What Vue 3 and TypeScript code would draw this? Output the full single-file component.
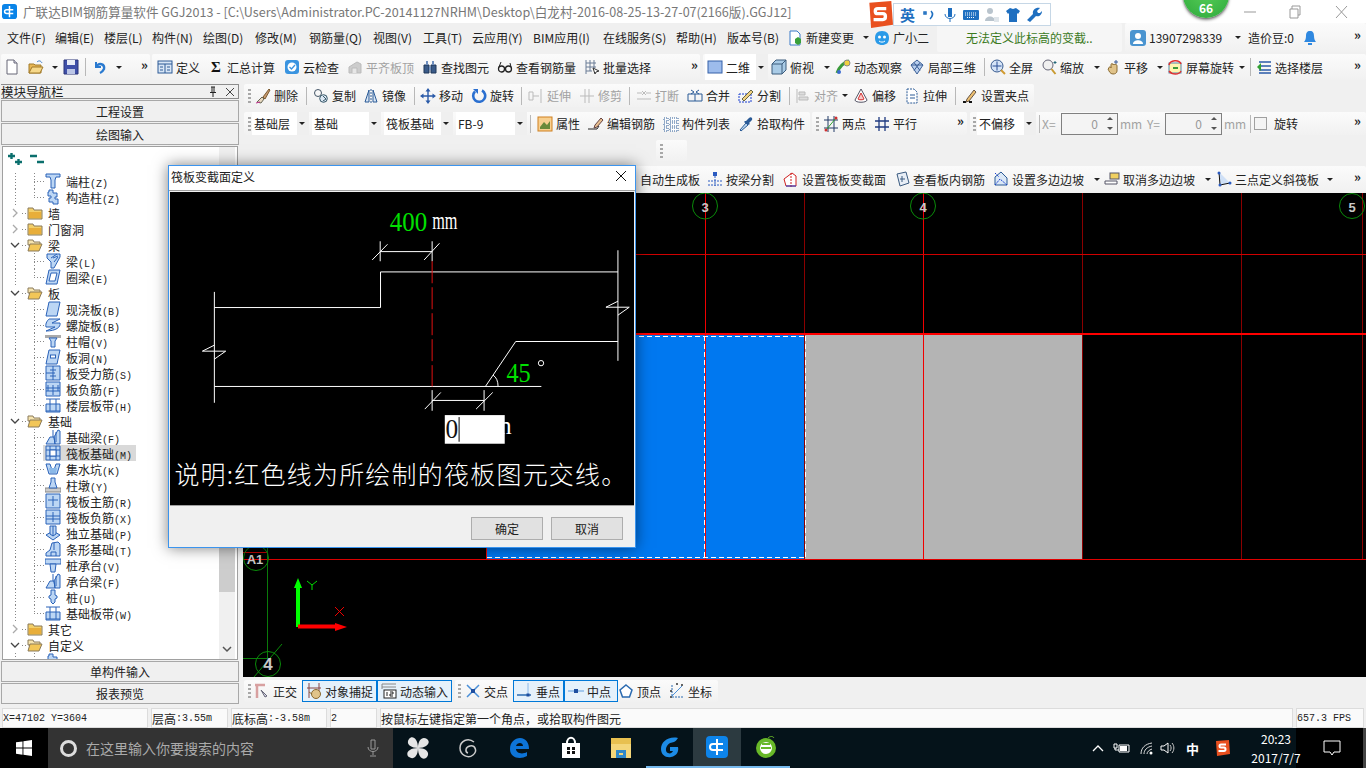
<template>
  <div class="screen">
    <!-- 标题栏 -->
    <div class="titlebar">
      <svg class="appicon" viewBox="0 0 16 16" v-html="icons.app"></svg>
      <span class="title">广联达BIM钢筋算量软件 GGJ2013 - [C:\Users\Administrator.PC-20141127NRHM\Desktop\白龙村-2016-08-25-13-27-07(2166版).GGJ12]</span>
      <div class="winbtns">
        <svg viewBox="0 0 46 20"><path d="M18 10h12" stroke="#999" fill="none" /></svg>
        <svg viewBox="0 0 46 20"><path d="M18 7h8v9h-8zM20 7V4h8v9h-2" stroke="#999" fill="none" /></svg>
        <svg viewBox="0 0 46 20"><path d="M18 4l11 12M29 4L18 16" stroke="#999" fill="none" /></svg>
      </div>
    </div>

    <!-- 工作区 -->
    <div class="work">
      <div v-for="row in rows" :key="row.cls" class="row" :class="row.cls">
        <div
          v-for="(p, pi) in row.pieces"
          :key="pi"
          class="piece"
          :class="p.cls"
          :style="{ marginLeft: p.ml + 'px', width: p.w + 'px', paddingLeft: p.pad + 'px' }"
        >
          <template v-for="(it, ii) in p.items" :key="ii">
            <div v-if="it.k === 'grip'" class="slot" :style="{ width: it.w + 'px' }"><i class="grip"></i></div>
            <div v-else-if="it.k === 'sep'" class="slot" :style="{ width: it.w + 'px' }"><i class="sep"></i></div>
            <div v-else-if="it.k === 'caret'" class="slot" :style="{ width: it.w + 'px' }"><i class="caret"></i></div>
            <div v-else-if="it.k === 'more'" class="slot more" :style="{ width: it.w + 'px' }">»</div>
            <div v-else-if="it.k === 'chk'" class="slot" :style="{ width: it.w + 'px' }"><i class="chk"></i></div>
            <div v-else-if="it.k === 'combo'" class="slot combo-wrap" :style="{ width: it.w + 'px' }">
              <div class="combo">
                <svg v-if="it.i" class="ic" viewBox="0 0 16 16" v-html="icons[it.i]"></svg>
                <span>{{ it.t }}</span>
              </div>
              <div class="combo-btn"><i class="caret"></i></div>
            </div>
            <div v-else-if="it.k === 'spin'" class="slot" :style="{ width: it.w + 'px' }">
              <div class="spin">
                <span>{{ it.t }}</span>
                <div class="arrows"><i class="up"></i><i class="down"></i></div>
              </div>
            </div>
            <div
              v-else
              class="tool"
              :class="{ dis: it.dis, active: it.active }"
              :style="{ width: it.w + 'px' }"
            >
              <svg v-if="it.i" class="ic" viewBox="0 0 16 16" v-html="icons[it.i]"></svg>
              <span>{{ it.t }}</span>
            </div>
          </template>
        </div>
      </div>

      <!-- 模块导航栏 -->
      <aside class="nav">
        <div class="nav-head">
          <span>模块导航栏</span>
          <div class="nav-head-btns">
            <svg viewBox="0 0 12 12"><path d="M4 1h4M5 1v5M7 1v5M3 6.500h6M6 7v4" stroke="#222" fill="none" /></svg>
            <svg viewBox="0 0 12 12"><path d="M2 2l8 8M10 2l-8 8" stroke="#444" fill="none" /></svg>
          </div>
        </div>
        <div class="nav-btn">工程设置</div>
        <div class="nav-btn">绘图输入</div>
        <div class="tree">
          <div class="tree-main">
            <div class="tree-bar">
              <svg viewBox="0 0 16 12"><path d="M1 3h7M4.500 0v6M8 9h7M11.500 6v6" stroke="#0b6f6d" stroke-width="2.400" fill="none" /></svg>
              <svg viewBox="0 0 16 12"><path d="M1 3h7M8 9h7" stroke="#0b6f6d" stroke-width="2.400" fill="none" /></svg>
            </div>
            <div
              v-for="(n, ni) in treeRows"
              :key="ni"
              class="node"
              :class="[n.g ? 'group' : 'child', { last: n.last }]"
            >
              <svg v-if="n.g" class="chev" viewBox="0 0 10 10">
                <path v-if="n.open" d="M1 3l4 4 4-4" stroke="#444" stroke-width="1.300" fill="none" />
                <path v-else d="M3 1l4 4-4 4" stroke="#aaa" stroke-width="1.300" fill="none" />
              </svg>
              <div class="entry" :class="{ sel: n.sel }">
                <svg class="ic" viewBox="0 0 16 16" v-html="icons[n.i]"></svg>
                <span class="label">
                  <span v-for="(r, ri) in runs(n.t)" :key="ri" :class="{ lat: r.lat }">{{ r.t }}</span>
                </span>
              </div>
            </div>
          </div>
          <div class="vscroll">
            <div class="vs-gap"></div>
            <div class="vs-thumb"></div>
            <svg class="vs-down" viewBox="0 0 10 8"><path d="M1 1l4 4 4-4" stroke="#555" stroke-width="1.500" fill="none" /></svg>
          </div>
        </div>
        <div class="nav-btn low">单构件输入</div>
        <div class="nav-btn low">报表预览</div>
      </aside>

      <!-- 绘图区 -->
      <svg class="canvas" viewBox="243 193 1123 484" width="1123" height="484">
        <rect x="487" y="334" width="318" height="225" fill="#0078f0" />
        <rect x="805" y="334" width="278" height="225" fill="#b4b4b4" />
        <g fill="none" shape-rendering="crispEdges">
          <path d="M804.500 193V559M1082.500 193V559M1241.500 193V559M1362.500 193V559" stroke="#8a0000" />
          <path d="M705.500 193V559M923.500 193V559M486.500 333V559" stroke="#f00000" />
          <path d="M243 254.500H1366" stroke="#d00000" />
          <path d="M243 333.500H1366" stroke="#ff0000" stroke-width="2" />
          <path d="M243 559.500H1366" stroke="#e00000" />
          <path d="M243 552.500H268" stroke="#c00000" />
          <path d="M487 336.500H805M487 557.500H805M704.500 336V558M805.500 336V558" stroke="#fff" stroke-dasharray="5 3" />
          <path d="M267.500 193V658M243 658.500H268" stroke="#0a7a0a" />
        </g>
        <g fill="none" stroke="#0a8a0a">
          <ellipse cx="705" cy="206" rx="12.500" ry="13" />
          <ellipse cx="923" cy="206" rx="12.500" ry="13" />
          <circle cx="1352" cy="206" r="12.500" />
          <circle cx="256" cy="558" r="12.500" />
          <circle cx="268" cy="664" r="12.500" />
          <path d="M254 677L282 644" />
        </g>
        <g class="axis-text">
          <text x="705" y="212">3</text>
          <text x="923" y="212">4</text>
          <text x="1352" y="212">5</text>
          <text x="255" y="564">A1</text>
          <text x="268" y="670" class="big">4</text>
        </g>
        <path d="M298 627V586" stroke="#00ff00" stroke-width="4" fill="none" />
        <path d="M298 578l-4 10h8z" fill="#00ff00" />
        <path d="M298 626.500H338" stroke="#ff0000" stroke-width="4" fill="none" />
        <path d="M347 627l-12-4v8z" fill="#ff0000" />
        <path d="M307 581l5 4 5-4M312 585v5" stroke="#00dd00" fill="none" />
        <path d="M335 607l9 9M344 607l-9 9" stroke="#ee0000" fill="none" />
      </svg>
    </div>

    <!-- 状态栏 -->
    <div class="status">
      <div v-for="c in statusCells" :key="c.t" class="cell" :class="c.cls">
        <span v-for="(r, ri) in runs(c.t)" :key="ri" :class="{ lat: r.lat }">{{ r.t }}</span>
      </div>
    </div>

    <!-- 任务栏 -->
    <div class="taskbar">
      <div class="start">
        <svg viewBox="0 0 16 16"><path d="M0 2.300l6.500-.9v6.200H0zM7.400 1.300L16 0v7.600H7.400zM0 8.500h6.500v6.200L0 13.800zM7.400 8.500H16V16l-8.600-1.200z" fill="#fff" /></svg>
      </div>
      <div class="search">
        <i class="cortana"></i>
        <span>在这里输入你要搜索的内容</span>
        <svg viewBox="0 0 12 18"><path d="M4 1h4v9H4zM1 8c0 6 10 6 10 0M6 13v3M3 17h6" stroke="#999" fill="none" /></svg>
      </div>
      <div
        v-for="a in apps"
        :key="a.i"
        class="app"
        :class="{ on: a.on, run: a.run }"
        :style="{ width: a.w + 'px' }"
      >
        <svg viewBox="0 0 24 24" v-html="icons[a.i]"></svg>
      </div>
      <div class="tray">
        <svg viewBox="0 0 14 14" class="t1"><path d="M2 10l5-5 5 5" stroke="#fff" stroke-width="1.300" fill="none" /></svg>
        <svg viewBox="0 0 18 14" class="t2"><path d="M1 3h3v4H1zM2 7v2h4M6 4h10v7H6z" stroke="#fff" fill="none" /><path d="M7 5h7v5H7z" fill="#fff" /></svg>
        <svg viewBox="0 0 16 14" class="t3"><path d="M2 13c0-6 4-10 11-11M5 13c0-4 3-7 8-8M8 13c0-2 2-4 5-5" stroke="#ddd" fill="none" /><circle cx="12" cy="12" r="1.500" fill="#fff" /></svg>
        <svg viewBox="0 0 16 14" class="t4"><path d="M1 5h3l4-3v10L4 9H1z" stroke="#fff" fill="none" /><path d="M10 4c1.500 2 1.500 4 0 6M12 2c2.500 3 2.500 7 0 10" stroke="#ccc" fill="none" /></svg>
        <span class="ime">中</span>
        <svg viewBox="0 0 16 16" class="t5" v-html="icons.sogou"></svg>
        <div class="clock"><div>20:23</div><div>2017/7/7</div></div>
        <div class="notify">
          <svg viewBox="0 0 18 16"><path d="M1 1h16v11h-6l-2 3-2-3H1z" stroke="#fff" fill="none" /></svg>
        </div>
      </div>
    </div>

    <!-- 输入法状态条 -->
    <div class="imebar">
      <svg class="ime-s" viewBox="0 0 16 16" v-html="icons.sogou"></svg>
      <div class="ime-tools">
        <b>英</b>
        <svg viewBox="0 0 16 16"><path d="M3 5h2v2H3zM10 4c2 2 2 5-1 8" stroke="#1f6fc0" stroke-width="1.500" fill="none" /></svg>
        <svg viewBox="0 0 16 16"><path d="M6 1h4v9H6z" fill="#1f6fc0" /><path d="M3 7c0 6 10 6 10 0M8 12v3" stroke="#1f6fc0" fill="none" /></svg>
        <svg viewBox="0 0 16 16"><rect x="0" y="3" width="16" height="10" rx="1" fill="#1f6fc0" /><path d="M2 6h12M2 8h12M4 10.500h8" stroke="#fff" stroke-dasharray="1 1" fill="none" /></svg>
        <svg viewBox="0 0 16 16"><circle cx="6" cy="4" r="3" fill="#b9c4cd" /><path d="M1 14c0-6 10-6 10 0z" fill="#b9c4cd" /><path d="M10 10h5v5h-5z" fill="#dfe5ea" /></svg>
        <svg viewBox="0 0 16 16"><path d="M5 1l3 1 3-1 4 3-2 3-1-1v9H4V6L3 7 1 4z" fill="#1f6fc0" /></svg>
        <svg viewBox="0 0 16 16"><path d="M14 1l-3 3 1 2 2 0 2-2c0 4-3 6-6 5l-6 6-3-2 6-6c-1-4 3-7 7-6z" fill="#1f6fc0" /></svg>
      </div>
    </div>
    <div class="ball"><span>66</span></div>

    <!-- 筏板变截面定义 对话框 -->
    <div class="dialog">
      <div class="dlg-title">
        <span>筏板变截面定义</span>
        <svg viewBox="0 0 12 12"><path d="M1 1l10 10M11 1L1 11" stroke="#111" fill="none" /></svg>
      </div>
      <svg class="dlg-draw" viewBox="15 80 1393 940" width="464" height="313">
        <g stroke="#fff" stroke-width="3" fill="none">
          <path d="M148 380V713M148 427H647V320H1360M1360 255V587M148 664H1130M1360 529H1053L962 664M985 630Q1000 640 1000 664" />
          <path d="M646 259H802M646 228V288M802 228V288M622 284L668 237M778 284L824 234" />
          <path d="M802 706H958M802 675V737M958 675V737M780 732L828 682M934 732L984 682" />
          <path d="M112 558H182L148 582M112 558L148 540M1324 426H1394L1360 450M1324 426L1360 408" />
        </g>
        <path d="M802 288V664" stroke="#e01010" stroke-width="3" stroke-dasharray="66 12" fill="none" />
        <text x="675" y="197" class="serif green" textLength="112" lengthAdjust="spacingAndGlyphs">400</text>
        <text x="802" y="190" class="serif white mm" textLength="76" lengthAdjust="spacingAndGlyphs">mm</text>
        <text x="1025" y="650" class="serif green" textLength="73" lengthAdjust="spacingAndGlyphs">45</text>
        <circle cx="1129" cy="594" r="8" stroke="#fff" stroke-width="3" fill="none" />
        <text x="1003" y="808" class="serif white mm">n</text>
        <rect x="840" y="750" width="180" height="86" fill="#fff" />
        <text x="842" y="818" class="serif dark" textLength="38" lengthAdjust="spacingAndGlyphs">0</text>
        <path d="M883 756V830" stroke="#000" stroke-width="3" />
        <text x="28" y="956" class="desc" textLength="1357" lengthAdjust="spacing">说明:红色线为所绘制的筏板图元交线。</text>
      </svg>
      <div class="dlg-foot">
        <div class="dlg-btn">确定</div>
        <div class="dlg-btn">取消</div>
      </div>
    </div>
  </div>
</template>

<script setup lang="ts">
type Item = { k: string; at: number; w?: number; i?: string; t?: string; dis?: boolean; active?: boolean }
type Piece = { from: number; to: number; cls?: string; items: Item[] }

// 简写
const T = (at: number, i: string, t: string, dis = false): Item => ({ k: 'tool', at, i, t, dis })
const A = (at: number, i: string, t: string): Item => ({ k: 'tool', at, i, t, active: true })
const W = (at: number, t: string): Item => ({ k: 'tool', at, t })
const C = (at: number): Item => ({ k: 'caret', at })
const S = (at: number): Item => ({ k: 'sep', at })
const G = (at: number): Item => ({ k: 'grip', at })
const M = (at: number): Item => ({ k: 'more', at })
const O = (at: number, t: string, i?: string): Item => ({ k: 'combo', at, t, i })

// 按起点坐标换算每段宽度
const layout = (cls: string, origin: number, pieces: Piece[]) => {
  let prev = origin
  const out = pieces.map((p) => {
    const items = p.items.map((it, n) => {
      const next = p.items[n + 1]
      return { ...it, w: (next ? next.at : p.to) - it.at }
    })
    const res = { cls: p.cls, ml: p.from - prev, w: p.to - p.from, pad: p.items.length ? p.items[0].at - p.from : 0, items }
    prev = p.to
    return res
  })
  return { cls, pieces: out }
}

const rows = [
  layout('r-menu', 0, [
    {
      from: 0,
      to: 935,
      cls: 'flat',
      items: [
        W(7, '文件(F)'), W(55, '编辑(E)'), W(104, '楼层(L)'), W(152, '构件(N)'), W(203, '绘图(D)'), W(255, '修改(M)'),
        W(309, '钢筋量(Q)'), W(373, '视图(V)'), W(423, '工具(T)'), W(472, '云应用(Y)'), W(533, 'BIM应用(I)'),
        W(603, '在线服务(S)'), W(676, '帮助(H)'), W(727, '版本号(B)'), T(787, 'newchg', '新建变更'), C(861),
        T(874, 'xiao', '广小二'),
      ],
    },
    { from: 937, to: 1122, cls: 'tip', items: [{ k: 'tool', at: 966, t: '无法定义此标高的变截..' }] },
    {
      from: 1125,
      to: 1366,
      items: [T(1130, 'user', '13907298339'), C(1233), W(1248, '造价豆:0'), T(1302, 'bell', ''), M(1354)],
    },
  ]),
  layout('r-tb1', 0, [
    {
      from: 1,
      to: 150,
      items: [
        T(4, 'new', ''), T(28, 'open', ''), C(50), T(63, 'save', ''), S(85), T(92, 'undo', ''), C(114), M(141),
      ],
    },
    {
      from: 152,
      to: 700,
      items: [
        T(157, 'define', '定义'), T(208, 'sigma', '汇总计算'), T(284, 'cloud', '云检查'), T(347, 'align', '平齐板顶', true),
        T(422, 'find', '查找图元'), T(497, 'glass', '查看钢筋量'), T(584, 'batch', '批量选择'), M(691),
      ],
    },
    {
      from: 703,
      to: 1366,
      items: [
        O(705, '二维', 'square'), T(771, 'box', '俯视'), C(822), T(835, 'orbit', '动态观察'), T(909, 'local3d', '局部三维'),
        S(984), T(990, 'full', '全屏'), T(1041, 'zoom', '缩放'), C(1092), T(1105, 'pan', '平移'), C(1155),
        T(1167, 'screen', '屏幕旋转'), C(1237), S(1250), T(1256, 'floors', '选择楼层'), M(1354),
      ],
    },
  ]),
  layout('r-tb2', 243, [
    {
      from: 244,
      to: 1034,
      items: [
        G(248), T(255, 'del', '删除'), S(306), T(313, 'copy', '复制'), T(363, 'mirror', '镜像'), S(414), T(420, 'move', '移动'),
        T(471, 'rotate', '旋转'), S(521), T(528, 'ext', '延伸', true), T(579, 'trim', '修剪', true), S(629),
        T(636, 'brk', '打断', true), T(687, 'merge', '合并'), T(738, 'split', '分割'), S(789), T(795, 'alignl', '对齐', true),
        C(840), T(853, 'offset', '偏移'), T(904, 'stretch', '拉伸'), S(955), T(962, 'grip', '设置夹点'),
      ],
    },
  ]),
  layout('r-tb3', 243, [
    {
      from: 244,
      to: 810,
      items: [
        G(248), O(252, '基础层'), O(312, '基础'), O(384, '筏板基础'), O(456, 'FB-9'), S(530), T(537, 'attr', '属性'),
        T(588, 'editbar', '编辑钢筋'), T(663, 'list', '构件列表'), T(738, 'pick', '拾取构件'),
      ],
    },
    {
      from: 812,
      to: 967,
      items: [G(816), T(823, 'twopt', '两点'), T(874, 'para', '平行'), M(957)],
    },
    {
      from: 970,
      to: 1366,
      items: [
        G(973), O(977, '不偏移'), S(1039), { ...W(1042, 'X='), dis: true }, { k: 'spin', at: 1061, t: '0' },
        { ...W(1120, 'mm'), dis: true }, { ...W(1147, 'Y='), dis: true }, { k: 'spin', at: 1165, t: '0' },
        { ...W(1224, 'mm'), dis: true }, S(1250), { k: 'chk', at: 1254 }, W(1274, '旋转'), M(1354),
      ],
    },
  ]),
  layout('r-tb0', 243, [{ from: 656, to: 687, items: [G(660)] }]),
  layout('r-tb4', 243, [
    {
      from: 244,
      to: 1366,
      items: [
        W(640, '自动生成板'), T(707, 'beamsp', '按梁分割'), T(783, 'varsec', '设置筏板变截面'), T(894, 'viewbar', '查看板内钢筋'),
        T(993, 'slope', '设置多边边坡'), C(1092), T(1104, 'unslope', '取消多边边坡'), C(1203), T(1216, 'tri', '三点定义斜筏板'),
        C(1325), M(1354),
      ],
    },
  ]),
  layout('r-snap', 243, [
    {
      from: 244,
      to: 452,
      items: [G(248), T(254, 'ortho', '正交'), A(302, 'snap', '对象捕捉'), A(377, 'dyn', '动态输入')],
    },
    {
      from: 455,
      to: 718,
      items: [
        G(458), T(465, 'cross', '交点'), A(513, 'perp', '垂点'), A(564, 'mid', '中点'), T(618, 'vertex', '顶点'), T(669, 'coord', '坐标'),
      ],
    },
  ]),
]

const treeRows = [
  { t: '端柱(Z)', i: 'tColumn' },
  { t: '构造柱(Z)', i: 'tGz', last: true },
  { t: '墙', i: 'folder', g: true },
  { t: '门窗洞', i: 'folder', g: true },
  { t: '梁', i: 'folderOpen', g: true, open: true },
  { t: '梁(L)', i: 'tBeam' },
  { t: '圈梁(E)', i: 'tRing', last: true },
  { t: '板', i: 'folderOpen', g: true, open: true },
  { t: '现浇板(B)', i: 'tSlab' },
  { t: '螺旋板(B)', i: 'tSpiral' },
  { t: '柱帽(V)', i: 'tCap' },
  { t: '板洞(N)', i: 'tHole' },
  { t: '板受力筋(S)', i: 'tBarS' },
  { t: '板负筋(F)', i: 'tBarF' },
  { t: '楼层板带(H)', i: 'tBand', last: true },
  { t: '基础', i: 'folderOpen', g: true, open: true },
  { t: '基础梁(F)', i: 'tFBeam' },
  { t: '筏板基础(M)', i: 'tRaft', sel: true },
  { t: '集水坑(K)', i: 'tPit' },
  { t: '柱墩(Y)', i: 'tPier' },
  { t: '筏板主筋(R)', i: 'tBarR' },
  { t: '筏板负筋(X)', i: 'tBarX' },
  { t: '独立基础(P)', i: 'tIso' },
  { t: '条形基础(T)', i: 'tStrip' },
  { t: '桩承台(V)', i: 'tPileCap' },
  { t: '承台梁(F)', i: 'tFBeam' },
  { t: '桩(U)', i: 'tPile' },
  { t: '基础板带(W)', i: 'tBand', last: true },
  { t: '其它', i: 'folder', g: true },
  { t: '自定义', i: 'folderOpen', g: true, open: true },
  { t: '', i: 'tGz' },
] as { t: string; i: string; g?: boolean; open?: boolean; last?: boolean; sel?: boolean }[]

const statusCells = [
  { t: 'X=47102 Y=3604', cls: 'c1' },
  { t: '层高:3.55m', cls: 'c2' },
  { t: '底标高:-3.58m', cls: 'c3' },
  { t: '2', cls: 'c4' },
  { t: '按鼠标左键指定第一个角点，或拾取构件图元', cls: 'c5' },
  { t: '657.3 FPS', cls: 'c6' },
]

const apps = [
  { i: 'aFan', w: 50 },
  { i: 'aSwirl', w: 49 },
  { i: 'aEdge', w: 54 },
  { i: 'aStore', w: 50 },
  { i: 'aFiles', w: 50 },
  { i: 'aG', w: 47, run: true },
  { i: 'aGld', w: 48, on: true, run: true },
  { i: 'aIe', w: 49, run: true },
]

// 中西文分段：西文用等宽小字，接近宋体半角宽度
const runs = (s: string) =>
  s
    .split(/([\x00-\x7f]+)/)
    .filter(Boolean)
    .map((t) => ({ t, lat: /^[\x00-\x7f]/.test(t) }))

const BL = '#2a62b8'
const LB = '#bcd6f4'
const col = (d: string) => `<path d="${d}" fill="${LB}" stroke="${BL}"/>`
const line = (d: string, c = BL) => `<path d="${d}" fill="none" stroke="${c}"/>`

const icons: Record<string, string> = {
  app: `<rect width="16" height="16" rx="3" fill="#0a84e8"/><path d="M8 2v12M12 6H5c-3 0-3 4 0 4h7" stroke="#fff" stroke-width="1.600" fill="none"/>`,
  sogou: `<path d="M2 1l13-1 1 14-13 2z" fill="#e9501f"/><path d="M12 4.500H7c-2 0-2 3 0 3h3c2 0 2 3.500 0 3.500H4.500" stroke="#fff" stroke-width="2" fill="none"/>`,
  new: `<path d="M3 1h7l3 3v11H3z" fill="#fff" stroke="#667"/><path d="M10 1v3h3" fill="#dde" stroke="#667"/>`,
  open: `<path d="M1 5h5l1 1h6v8H1z" fill="#e7b654" stroke="#a17a2a"/><path d="M1 14l3-6h11l-3 6z" fill="#f6d88a" stroke="#a17a2a"/><path d="M9 3c2-2 4-1 5 1" stroke="#3a7ac8" fill="none"/>`,
  save: `<path d="M1 1h14v14H1z" fill="#3f4fa8" stroke="#2a3578"/><path d="M4 1h8v5H4z" fill="#e8ecf6"/><path d="M4 10h8v5H4z" fill="#bcc6e6"/>`,
  undo: `<path d="M4 3v5h5" fill="none" stroke="#2a7ad0" stroke-width="2"/><path d="M4 8c3-5 9-3 8 2-1 2-2 3-4 4" fill="none" stroke="#2a7ad0" stroke-width="2.400"/>`,
  define: `<rect x="1" y="2" width="14" height="12" fill="#d8e6f6" stroke="#2d5a96"/><path d="M1 5h14M8 5v9M3 8h3M3 11h3M10 8h3M10 11h3" stroke="#2d5a96" fill="none"/>`,
  sigma: `<text x="8" y="13" text-anchor="middle" font-family="Liberation Serif" font-weight="700" font-size="15" fill="#111">Σ</text>`,
  cloud: `<rect x="1" y="1" width="14" height="14" rx="3" fill="#3a94e0"/><circle cx="8" cy="8" r="4.500" fill="#fff"/><path d="M5.500 8l2 2 3.500-4" stroke="#3a94e0" fill="none" stroke-width="1.300"/>`,
  align: `<path d="M2 8l8-5 4 2v9H2z" fill="#ccc" stroke="#bbb"/><path d="M5 14V9h5v5" fill="#e6e6e6" stroke="#bbb"/>`,
  find: `<path d="M2 6h5v8H2zM9 6h5v8H9z" fill="#3a5a88" stroke="#1e3658"/><path d="M4 2h2v4H4zM10 2h2v4h-2zM7 8h2v3H7z" fill="#6f8fbf"/>`,
  glass: `<circle cx="4.500" cy="10" r="3" fill="none" stroke="#222" stroke-width="1.300"/><circle cx="11.500" cy="10" r="3" fill="none" stroke="#222" stroke-width="1.300"/><path d="M7.500 10h1.500M2 8l2-5M14 8l-1-4" stroke="#222" fill="none"/>`,
  batch: `<path d="M2 1v14M6 1v11M10 1v8M2 4h10M2 8h10M2 12h6" stroke="#6a7d96" fill="none"/><path d="M9 9l6 3-3 1-1 2z" fill="#fff" stroke="#333"/>`,
  square: `<rect x="1" y="2" width="14" height="12" fill="#9dbcec" stroke="#3560a8"/>`,
  box: `<path d="M5 1h10v10l-4 4H1V5z" fill="#a9cbe6" stroke="#3c5c7c"/><path d="M1 5h10v10M11 5l4-4" stroke="#3c5c7c" fill="none"/>`,
  orbit: `<path d="M2 14C4 8 9 3 14 2" stroke="#3a9a3a" stroke-width="3" fill="none"/><circle cx="12" cy="4" r="3" fill="#f0d040" stroke="#888"/><circle cx="4" cy="13" r="2" fill="#3a6ad0"/>`,
  local3d: `<path d="M2 6l6-5 6 5-6 9z" fill="#b9cfee" stroke="#3a5f96"/><path d="M5 3.500l6 8M11 3.500l-6 8M2 6h12" stroke="#3a5f96" fill="none"/>`,
  full: `<circle cx="7" cy="7" r="6" fill="#d5e4f7" stroke="#36598e"/><path d="M7 2.500v9M2.500 7h9" stroke="#2a4f96" fill="none"/><path d="M11 11l4 4" stroke="#d09a30" stroke-width="2"/>`,
  zoom: `<circle cx="7" cy="6" r="5" fill="#f0f0f0" stroke="#667"/><path d="M10.500 10l4 5" stroke="#c89a30" stroke-width="2"/><path d="M14 2v3M12.500 3.500h3" stroke="#267" fill="none"/>`,
  pan: `<path d="M4 9c0-2 2-1 2 0V6c0-2 2-2 2 0 0-1 2-1 2 0 0-1 2-1 2 1v5c0 2-2 3-4 3-3 0-4-3-5-5z" fill="#e0c38a" stroke="#8a6a30"/><path d="M11 1v4M9 3h4" stroke="#3a5a96" fill="none"/>`,
  screen: `<rect x="2" y="4" width="12" height="10" fill="#fff4b0" stroke="#58a"/><path d="M2 6C3 1 12 0 14 5" stroke="#e03030" stroke-width="1.500" fill="none"/><path d="M14 12c-2 4-9 4-12 0" stroke="#e03030" stroke-width="1.500" fill="none"/><path d="M6 9h5" stroke="#3a9a3a" stroke-width="2"/>`,
  floors: `<path d="M3 3h12M3 7h12M3 11h12M3 14h12" stroke="#2a5aa8" stroke-width="1.600" fill="none"/><path d="M1 8l4-4v8z" fill="#30a030"/>`,
  del: `<path d="M2 14l5-5 2 2-3 4z" fill="#e8d8c0" stroke="#665"/><path d="M8 9l6-8 1 1-5 9z" fill="#c89a70" stroke="#7a5a30"/><path d="M1 15l4-1" stroke="#c03090"/>`,
  copy: `<circle cx="5" cy="5" r="3.500" fill="none" stroke="#456"/><circle cx="10.500" cy="10.500" r="3.800" fill="#dce8f4" stroke="#356"/><path d="M10 8l3 3-3 2" stroke="#356" fill="none"/>`,
  mirror: `<path d="M6 2L2 14h4zM10 2l4 12h-4z" fill="#d6e4f4" stroke="#2a5a96"/><path d="M8 1v14" stroke="#2a5a96" stroke-dasharray="2 1"/>`,
  move: `<path d="M8 0l2.500 3.500h-5zM8 16l-2.500-3.500h5zM0 8l3.500-2.500v5zM16 8l-3.500 2.500v-5z" fill="#2a5aa8"/><path d="M8 3v10M3 8h10" stroke="#2a5aa8" stroke-width="1.400"/>`,
  rotate: `<path d="M11 2.500A6 6 0 1 1 4 3.500" stroke="#2a6fd0" stroke-width="2.600" fill="none"/><path d="M2 1h5v5z" fill="#2a6fd0"/>`,
  ext: `<path d="M1 4h4v8H1zM13 1v14M5 8h6" stroke="#bbb" fill="none"/>`,
  trim: `<path d="M6 1v14M10 1v14M1 8h14" stroke="#bbb" fill="none"/>`,
  brk: `<path d="M1 5h5M10 5h5M1 11h14M6 3l2 2-2 2M10 3L8 5l2 2" stroke="#bbb" fill="none"/>`,
  merge: `<path d="M1 6h14M1 13h14M1 6v7M15 6v7M8 6v7M4 2l3 2-3 2M12 2L9 4l3 2" stroke="#2a5a96" fill="none"/>`,
  split: `<path d="M1 6h12v8H1z" fill="none" stroke="#1a3fd0" stroke-dasharray="2 1"/><path d="M4 11L13 2l2 2-9 9z" fill="#f0d080" stroke="#664"/>`,
  alignl: `<path d="M2 1v14M4 4h6v3H4zM4 9h9v3H4z" fill="#ddd" stroke="#bbb"/>`,
  offset: `<path d="M8 1l6 11c0 3-12 3-12 0z" fill="#fff" stroke="#556"/><path d="M8 5l3 6c0 1-6 1-6 0z" fill="#f8c8c8" stroke="#d03030"/>`,
  stretch: `<path d="M3 1h7l3 3v11H3z" fill="#fff" stroke="#2a5a96" stroke-dasharray="2 1"/><path d="M6 7h5M6 10h5" stroke="#2a5a96"/>`,
  grip: `<path d="M1 14h3M7 14h3" stroke="#111" stroke-width="2"/><path d="M5 11l7-9 2 2-7 9-3 1z" fill="#eec070" stroke="#654"/>`,
  attr: `<rect x="1" y="1" width="14" height="14" fill="#f8d090" stroke="#d08020"/><path d="M3 11l4-5 3 3 3-4v8H3z" fill="#6a8a3a"/>`,
  editbar: `<path d="M0 13h9l2-3" stroke="#222" fill="none"/><path d="M7 9l6-7 2 2-6 7-3 1z" fill="#e8c090" stroke="#644"/>`,
  list: `<path d="M1 2h4v3H1zM1 7h4v3H1zM1 12h4v3H1zM7 2h8v3H7zM7 7h8v3H7zM7 12h8v3H7z" fill="#fff" stroke="#2a5a96" stroke-dasharray="1 1"/>`,
  pick: `<path d="M2 14l6-7 2 2-7 6z" fill="#bcd8f0" stroke="#2a5a96"/><path d="M8 5l3-3c2-2 4 0 3 2l-3 3 1 1-2 1-4-3 1-1z" fill="#2a5a96"/>`,
  twopt: `<path d="M5 0v16M11 0v16M1 4h14M1 12h14" stroke="#223a66" fill="none"/><path d="M3 14L13 2" stroke="#30a030"/><circle cx="3" cy="14" r="1.500" fill="#d03030"/><circle cx="13" cy="2" r="1.500" fill="#d03030"/>`,
  para: `<path d="M5 1v14M11 1v14M1 5h14M1 11h14" stroke="#1f3a80" stroke-width="1.300" fill="none"/>`,
  beamsp: `<rect x="6" y="1" width="4" height="4" fill="#2a5ac0"/><path d="M8 5v10M1 10h14M1 14h14" stroke="#2a5ac0" stroke-dasharray="2 1" fill="none"/>`,
  varsec: `<path d="M1 8l8-6 4 3v10H3z" fill="#fff" stroke="#d02020"/><path d="M8 2v14" stroke="#d02020" stroke-dasharray="2 1"/><path d="M3 15h10" stroke="#1a3fd0"/>`,
  viewbar: `<path d="M3 3l9-2 3 11-9 3z" fill="#e8eef6" stroke="#3a5a80"/><path d="M6 8h5M8 5v6" stroke="#3a5a80"/>`,
  slope: `<path d="M2 14V6l6-5 6 6v7z" fill="#dbe8f6" stroke="#2a5a96"/><path d="M2 2l4 4M2 14l5-6 7 6" stroke="#1a3fd0" fill="none" stroke-dasharray="2 1"/>`,
  unslope: `<rect x="6" y="2" width="9" height="6" fill="#f0d060" stroke="#556"/><path d="M1 10h12v3H1z" fill="#fff" stroke="#556"/>`,
  tri: `<path d="M3 1l1 13 10-2" fill="#cfe0f6" stroke="#111"/><circle cx="3" cy="2" r="1.500" fill="#2a5ac0"/><circle cx="4" cy="14" r="1.500" fill="#2a5ac0"/><circle cx="14" cy="12" r="1.500" fill="#2a5ac0"/>`,
  ortho: `<path d="M1 2h10M3 2v13" stroke="#d8a0a0" stroke-width="2.500" fill="none"/><path d="M7 7l6 6-2 1z" fill="#dde" stroke="#667"/>`,
  snap: `<path d="M3 0v15M13 0v8M1 5h14" stroke="#884444" fill="none"/><circle cx="10" cy="11" r="4.500" fill="#e0c48a" stroke="#8a6a30"/><path d="M6 11l-3-2" stroke="#8a6a30"/>`,
  dyn: `<path d="M1 1h14M1 4h14M1 1v5" stroke="#888" fill="none"/><rect x="3" y="7" width="12" height="8" fill="#fff" stroke="#222"/><path d="M6 9v4M9 9h3v2h-3v2h3" stroke="#222" fill="none"/>`,
  cross: `<path d="M2 2l12 12M14 2L2 14" stroke="#4a90d9" stroke-width="1.500"/><rect x="6" y="6" width="4" height="4" fill="#1f4fa0"/>`,
  perp: `<path d="M11 0v12" stroke="#8ab8e8"/><path d="M0 12h14" stroke="#2a6ab0" stroke-width="1.500"/><rect x="9.500" y="10.500" width="3" height="3" fill="#1f4fa0"/>`,
  mid: `<path d="M0 8h16" stroke="#8ab8e8" stroke-width="1.500"/><rect x="6" y="6" width="4" height="4" fill="#1f4fa0"/>`,
  vertex: `<path d="M8 2l6 5-2.500 7h-7L2 7z" fill="#fff" stroke="#2a6ab0" stroke-width="1.500"/>`,
  coord: `<path d="M3 2v12h12" stroke="#2a6ab0" stroke-dasharray="2 1" fill="none"/><path d="M3 13L13 3" stroke="#4a90d9"/><circle cx="2" cy="8" r="1" fill="#333"/><circle cx="13" cy="2" r="1" fill="#333"/><circle cx="8" cy="1" r="1" fill="#333"/><circle cx="2" cy="14" r="1" fill="#333"/>`,
  newchg: `<path d="M3 1h7l3 3v11H3z" fill="#fff" stroke="#3a7ac8"/><path d="M8 9l3-2 3 2v4l-3 2-3-2z" fill="#3aa03a"/>`,
  xiao: `<path d="M8 1c5 0 7 3 7 7 0 5-3 7-7 7s-7-2-7-7c0-4 2-7 7-7z" fill="#2a9ae8"/><circle cx="5.500" cy="7" r="1.500" fill="#fff"/><circle cx="10.500" cy="7" r="1.500" fill="#fff"/><path d="M5 11c2 1.500 4 1.500 6 0" stroke="#fff" fill="none"/>`,
  user: `<rect width="16" height="16" rx="3" fill="#4a94d0"/><circle cx="8" cy="6" r="3" fill="#fff"/><path d="M3 14c0-5 10-5 10 0z" fill="#fff"/>`,
  bell: `<path d="M8 1c3 0 4 2 4 5 0 3 1 5 2 6H2c1-1 2-3 2-6 0-3 1-5 4-5z" fill="#2f88e0"/><path d="M6 13h4v2H6z" fill="#2f88e0"/>`,
  folder: `<path d="M1 3h5l1 2h8v9H1z" fill="#f2cf6a" stroke="#8a7a5a"/><path d="M2 7h12v6H2z" fill="#e8ae3a"/>`,
  folderOpen: `<path d="M1 3h5l1 2h6v3H1z" fill="#f6e4ae" stroke="#8a7a5a"/><path d="M1 14l2-7h12l-3 7z" fill="#f2c658" stroke="#8a7a5a"/>`,
  tColumn: col('M1 1h14v3h-4l-1 3v8H6V7L5 4H1z'),
  tGz: col('M4 1h4v3h4v4h-2v2h3v5H8v-2H4V9h2V7H3V3h1z'),
  tBeam: col('M2 1h13v3L9 15H6v-6L2 5z') + line('M6 5l6-4M8 5l5-2M9 9l4-5'),
  tRing: col('M4 1h11l-3 14H1z') + `<path d="M6 4h6l-2 8H4z" fill="#fff" stroke="${BL}"/>`,
  tSlab: col('M4 1h11l-3 14H1z'),
  tSpiral: col('M4 2h11L7 6h8c1 4-4 8-14 8l9-4H1c-1-4 2-7 3-8z'),
  tCap: `<path d="M0 2h16v3H0z" fill="#aaa"/>` + col('M4 5h8l-2 3v6H6V8z'),
  tHole: col('M4 1h11l-3 14H1z') + `<rect x="5.500" y="6" width="5" height="3" fill="#fff" stroke="${BL}"/>`,
  tBarS: col('M1 1h14v14H1z') + line('M8 1v14M1 8h9M5 5h6M5 11h6'),
  tBarF: col('M1 1h14v14H1z') + line('M1 7h14M1 10h14M8 4v10M3 4v6M13 4v6'),
  tBand: col('M1 7h14v8H1z') + line('M1 2h14M1 14h14M5 2v12M11 2v12', '#2a62b8'),
  tFBeam: col('M1 15l4-7h4l1 7zM9 8l4-7 2 1v13h-5z') + line('M8 1v7M11 3v10'),
  tRaft: col('M1 1h14v14H1z') + line('M1 5h14M1 11h14M5 1v14M11 1v14') + `<path d="M5 5h6v6H5z" fill="#fff" stroke="${BL}"/>`,
  tPit: `<path d="M1 3h4l2 6h2l2-6h4l-3 10H4z" fill="${LB}" stroke="${BL}"/><path d="M4 7h8l-1 5H5z" fill="#8ab8e8"/>`,
  tPier: `<path d="M0 11h16v4H0z" fill="#ccc" stroke="#888"/><path d="M6 1h4v4l2 6H4l2-6z" fill="${LB}" stroke="${BL}"/>`,
  tBarR: col('M1 1h14v14H1z') + line('M8 3v10M3 7h10'),
  tBarX: col('M1 1h14v14H1z') + line('M1 7h14M1 10h14M8 3v10'),
  tIso: col('M1 10l7-4 7 4-7 5z') + col('M5 1h6v8l-3 2-3-2z') + line('M8 1v10'),
  tStrip: col('M1 15v-3l4-3 2-7 6-1 2 2v12z') + line('M9 2v7M6 15v-4h5v4'),
  tPileCap: col('M0 2h16v5H0z') + col('M5 7h6l-1 8H6z'),
  tPile: col('M6 1h4v5l2 1v2l-2 1v3l-2 2-2-2v-3L4 9V7l2-1z'),
  aFan: `<path d="M12 12C3 12 0 7 3 3s9-1 9 9zM12 12c0-9 5-12 9-9s1 9-9 9zM12 12c9 0 12 5 9 9s-9 1-9-9zM12 12c0 9-5 12-9 9s-1-9 9-9z" fill="#e6e6e6"/>`,
  aSwirl: `<path d="M18 6C12 1 4 5 4 12s8 11 13 7 2-10-3-9-5 6-2 7" stroke="#ccc" stroke-width="1.500" fill="none"/>`,
  aEdge: `<path d="M3 13C3 6 8 2 13 2c6 0 9 5 9 11H9c0 4 6 6 11 3v4c-7 4-17 2-17-7zm6-3h7c0-4-6-4-7 0z" fill="#0d74d8"/>`,
  aStore: `<path d="M3 7h18v15H3z" fill="#fff"/><path d="M8 7c0-7 8-7 8 0" stroke="#fff" stroke-width="2" fill="none"/><path d="M8 11h3v3H8zM13 11h3v3h-3zM8 15h3v3H8zM13 15h3v3h-3z" fill="#111"/>`,
  aFiles: `<path d="M2 2h20v20H2z" fill="#f4d67a"/><path d="M2 2h20v6H2z" fill="#e8c050"/><path d="M7 14h10v8H7z" fill="#2f88c8"/><path d="M10 17h4v2h-4z" fill="#f4d67a"/>`,
  aG: `<path d="M20 3C10 1 3 7 3 14c0 6 5 9 10 8 6-1 8-6 7-10h-8v4h3c-1 2-3 3-5 2-3-1-3-7 2-10 3-1 5 0 8-5z" fill="#1c8be6"/>`,
  aGld: `<rect x="1" y="1" width="22" height="22" rx="4" fill="#0d84ea"/><path d="M12 4v16M18 9H8c-4 0-4 6 0 6h10" stroke="#fff" stroke-width="2" fill="none"/>`,
  aIe: `<circle cx="12" cy="13" r="10" fill="#68b828"/><circle cx="12" cy="13" r="6" fill="#fff"/><path d="M7 13h10M8 9h8" stroke="#68b828" stroke-width="2"/><path d="M14 3c2-2 5-2 6 0" stroke="#68b828" fill="none"/>`,
}
</script>

<style scoped>
.screen {
  position: relative;
  width: 1366px;
  height: 768px;
  overflow: hidden;
  background: #f0f0f0;
  font-family: "Noto Sans CJK SC", "Liberation Sans", sans-serif;
  font-size: 12px;
  color: #222;
}

.titlebar {
  display: flex;
  align-items: center;
  height: 23px;
  background: #fff;
}
.appicon {
  width: 15px;
  height: 15px;
  margin-left: 2px;
}
.title {
  margin-left: 6px;
  font-size: 12.6px;
  color: #777;
  white-space: nowrap;
}
.winbtns {
  margin-left: auto;
  display: flex;
  padding-right: 2px;
}
.winbtns svg {
  width: 46px;
  height: 20px;
}

.work {
  display: grid;
  grid-template-columns: 243px 1123px;
  grid-template-rows: 30px 31px 26px 27px 28px 28px 484px 31px;
  height: 685px;
}
.row {
  display: flex;
  align-items: flex-start;
  min-width: 0;
}
.r-menu { grid-column: 1 / -1; grid-row: 1; }
.r-tb1 { grid-column: 1 / -1; grid-row: 2; padding-top: 1px; }
.r-tb2 { grid-column: 2; grid-row: 3; }
.r-tb3 { grid-column: 2; grid-row: 4; padding-top: 2px; }
.r-tb0 { grid-column: 2; grid-row: 5; padding-top: 3px; }
.r-tb4 { grid-column: 2; grid-row: 6; padding-top: 1px; }
.r-snap { grid-column: 2; grid-row: 8; padding-top: 3px; }

.piece {
  display: flex;
  align-items: center;
  flex: none;
  height: 26px;
  box-sizing: border-box;
  background: linear-gradient(#fbfbfb, #f1f1f1);
  border-radius: 2px;
  white-space: nowrap;
}
.r-menu .piece { height: 29px; }
.r-tb2 .piece { height: 23px; }
.r-tb3 .piece { height: 23px; }
.r-tb0 .piece { height: 21px; }
.r-snap .piece { height: 22px; }
.flat {
  background: #f0f0f0 !important;
}
.tip {
  background: #f6f6f6 !important;
  color: #3c7a1e;
}

.slot {
  display: flex;
  align-items: center;
  flex: none;
  height: 100%;
}
.tool {
  display: flex;
  align-items: center;
  flex: none;
  gap: 3px;
  height: 100%;
  box-sizing: border-box;
  overflow: visible;
}
.tool.dis {
  color: #a2a2a2;
}
.tool.active {
  padding-left: 3px;
  background: #e5f1fb;
  border: 1px solid #0078d7;
}
.ic {
  flex: none;
  width: 16px;
  height: 16px;
}
.grip {
  width: 3px;
  height: 14px;
  background: repeating-linear-gradient(#a8a8a8 0 2px, transparent 2px 4px);
}
.sep {
  width: 1px;
  height: 18px;
  background: #b8b8b8;
}
.caret {
  width: 0;
  height: 0;
  margin-left: 2px;
  border-left: 3px solid transparent;
  border-right: 3px solid transparent;
  border-top: 3px solid #222;
}
.more {
  font-size: 13px;
  font-weight: 700;
  padding-bottom: 6px;
  box-sizing: border-box;
}
.chk {
  width: 11px;
  height: 11px;
  border: 1px solid #a0a0a0;
  background: #f4f4f4;
}
.combo-wrap {
  padding-right: 3px;
  box-sizing: border-box;
}
.combo {
  flex: 1;
  display: flex;
  align-items: center;
  gap: 3px;
  height: 100%;
  padding-left: 2px;
  background: #fff;
  overflow: hidden;
}
.combo-btn {
  flex: none;
  display: flex;
  align-items: center;
  width: 12px;
  height: 100%;
  background: #efefef;
}
.spin {
  display: flex;
  align-items: center;
  justify-content: flex-end;
  width: 57px;
  height: 22px;
  box-sizing: border-box;
  border: 1px solid #808080;
  color: #999;
  background: #f4f4f4;
}
.arrows {
  display: flex;
  flex-direction: column;
  justify-content: space-around;
  width: 15px;
  height: 100%;
  margin-left: 4px;
  align-items: center;
}
.up, .down {
  width: 0;
  height: 0;
  border-left: 3px solid transparent;
  border-right: 3px solid transparent;
}
.up { border-bottom: 3px solid #555; }
.down { border-top: 3px solid #555; }

/* 左侧导航 */
.nav {
  grid-column: 1;
  grid-row: 3 / 9;
  display: flex;
  flex-direction: column;
  width: 238px;
  height: 621px;
  margin-left: 1px;
  gap: 1px;
}
.nav-head {
  display: flex;
  flex: none;
  align-items: center;
  height: 15px;
  box-sizing: border-box;
  border: 1px solid #8c8c8c;
  border-width: 1px 1px 1px 0;
  font-size: 12.5px;
  line-height: 13px;
}
.nav-head-btns {
  display: flex;
  gap: 5px;
  margin-left: auto;
  padding-right: 2px;
}
.nav-head-btns svg {
  width: 12px;
  height: 12px;
}
.nav-btn {
  display: flex;
  flex: none;
  align-items: center;
  justify-content: center;
  height: 22px;
  box-sizing: border-box;
  border: 1px solid #a8a8a8;
  background: #f0f0f0;
}
.nav-btn.low {
  height: 21px;
}
.tree {
  display: flex;
  flex: none;
  height: 514px;
  box-sizing: border-box;
  margin: 0 1px;
  overflow: hidden;
  border: 1px solid #a0a0a0;
  background: #fff;
}
.tree-main {
  flex: 1;
  min-width: 0;
}
.tree-bar {
  display: flex;
  align-items: flex-start;
  gap: 6px;
  height: 26px;
  box-sizing: border-box;
  padding: 6px 0 0 4px;
}
.tree-bar svg {
  width: 16px;
  height: 12px;
}
.node {
  display: flex;
  align-items: center;
  height: 16px;
  white-space: nowrap;
  box-sizing: border-box;
  font-size: 12px;
  color: #222;
}
.node.group {
  padding-left: 7px;
  background: repeating-linear-gradient(to right, #888 0 1px, transparent 1px 3px) 19px 8px / 6px 1px no-repeat;
}
.node.group .entry {
  margin-left: 5px;
}
.node.child {
  padding-left: 42px;
  background:
    repeating-linear-gradient(#888 0 1px, transparent 1px 3px) 12px 0 / 1px 100% no-repeat,
    repeating-linear-gradient(#888 0 1px, transparent 1px 3px) 31px 0 / 1px 100% no-repeat,
    repeating-linear-gradient(to right, #888 0 1px, transparent 1px 3px) 31px 8px / 12px 1px no-repeat;
}
.node.child.last {
  background:
    repeating-linear-gradient(#888 0 1px, transparent 1px 3px) 12px 0 / 1px 100% no-repeat,
    repeating-linear-gradient(#888 0 1px, transparent 1px 3px) 31px 0 / 1px 8px no-repeat,
    repeating-linear-gradient(to right, #888 0 1px, transparent 1px 3px) 31px 8px / 12px 1px no-repeat;
}
.entry {
  display: flex;
  align-items: center;
  gap: 5px;
  height: 16px;
  margin-left: -2px;
  padding: 0 4px 0 2px;
}
.entry.sel {
  background: #d9d9d9;
}
.chev {
  flex: none;
  width: 10px;
  height: 10px;
}
.lat {
  font-family: "Liberation Mono", monospace;
  font-size: 10px;
}
.vscroll {
  flex: none;
  display: flex;
  flex-direction: column;
  align-items: center;
  width: 16px;
  margin-right: 2px;
  background: #f0f0f0;
}
.vs-gap {
  height: 200px;
}
.vs-thumb {
  width: 100%;
  height: 245px;
  background: #cdcdcd;
}
.vs-down {
  width: 10px;
  height: 8px;
  margin-top: 54px;
}

.canvas {
  grid-column: 2;
  grid-row: 7;
  display: block;
  background: #000;
}
.axis-text text {
  font-family: "Liberation Sans", sans-serif;
  font-weight: 700;
  font-size: 13px;
  fill: #c8c8c8;
  text-anchor: middle;
}
.axis-text .big {
  font-size: 17px;
}

/* 状态栏 */
.status {
  display: flex;
  gap: 3px;
  height: 20px;
  padding-left: 2px;
  background: #f0f0f0;
  box-sizing: border-box;
}
.cell {
  display: flex;
  align-items: center;
  box-sizing: border-box;
  border: 1px solid #dcdcdc;
  background: #fafafa;
  white-space: pre;
  overflow: hidden;
}
.c1 { width: 146px; }
.c2 { width: 77px; }
.c3 { width: 96px; }
.c4 { width: 47px; }
.c5 { width: 913px; }
.c6 { width: 68px; }

/* 任务栏 */
.taskbar {
  display: flex;
  height: 40px;
  background: #05131a;
  color: #fff;
}
.start {
  display: flex;
  align-items: center;
  justify-content: center;
  width: 48px;
  background: #000;
}
.start svg {
  width: 16px;
  height: 16px;
}
.search {
  display: flex;
  align-items: center;
  width: 345px;
  background: #333;
  color: #aaa;
  font-size: 14px;
}
.search svg {
  width: 12px;
  height: 18px;
  margin-left: 113px;
}
.cortana {
  width: 11px;
  height: 11px;
  margin: 0 9px 0 12px;
  border: 3px solid #ddd;
  border-radius: 50%;
}
.app {
  display: flex;
  align-items: center;
  justify-content: center;
  flex: none;
  box-sizing: border-box;
  height: 40px;
}
.app svg {
  width: 24px;
  height: 24px;
}
.app.on {
  background: #2c3a40;
}
.app.run {
  border-bottom: 2px solid #76b9ed;
}
.tray {
  display: flex;
  align-items: center;
  margin-left: auto;
}
.t1 { width: 14px; height: 14px; margin-right: 8px; }
.t2 { width: 18px; height: 14px; margin-right: 8px; }
.t3 { width: 16px; height: 14px; margin-right: 5px; }
.t4 { width: 16px; height: 14px; margin-right: 10px; }
.t5 { width: 16px; height: 16px; margin-right: 26px; }
.ime {
  width: 14px;
  margin-right: 14px;
  font-size: 13px;
  font-weight: 700;
}
.clock {
  display: flex;
  flex-direction: column;
  align-items: center;
  width: 40px;
  line-height: 19px;
  white-space: nowrap;
  position: relative;
  z-index: 1;
}
.notify {
  display: flex;
  align-items: center;
  justify-content: center;
  width: 70px;
  height: 40px;
  padding-left: 4px;
  background: #000;
  border-right: 3px solid #444;
  box-sizing: border-box;
}
.notify svg {
  width: 18px;
  height: 16px;
}

/* 悬浮 */
.imebar {
  position: absolute;
  left: 866px;
  top: 1px;
  display: flex;
  align-items: center;
}
.ime-s {
  width: 27px;
  height: 27px;
}
.ime-tools {
  display: flex;
  align-items: center;
  gap: 5px;
  width: 158px;
  height: 23px;
  box-sizing: border-box;
  padding-left: 6px;
  background: #fff;
  border: 1px solid #c6d7e6;
}
.ime-tools b {
  width: 16px;
  font-size: 15px;
  color: #1f6fc0;
}
.ime-tools svg {
  width: 16px;
  height: 16px;
}
.ball {
  position: absolute;
  left: 1183px;
  top: -28px;
  display: flex;
  align-items: flex-end;
  justify-content: center;
  width: 46px;
  height: 46px;
  padding-bottom: 4px;
  box-sizing: border-box;
  border-radius: 50%;
  background: radial-gradient(circle at 50% 40%, #58cf58, #2ea83c);
  box-shadow: 0 2px 3px rgba(0, 0, 0, .5), 0 0 0 1px #e6e6e6;
  color: #fff;
  font-size: 12px;
  line-height: 12px;
  font-weight: 700;
}

.dialog {
  position: absolute;
  left: 168px;
  top: 165px;
  width: 468px;
  height: 383px;
  box-sizing: border-box;
  border: 1px solid #3b94ee;
  background: #f0f0f0;
  box-shadow: 0 0 14px rgba(0, 0, 0, .5);
}
.dlg-title {
  display: flex;
  align-items: center;
  justify-content: space-between;
  height: 25px;
  box-sizing: border-box;
  padding: 0 8px 4px 2px;
  background: #fff;
  border-bottom: 1px solid #a0a0a0;
}
.dlg-title svg {
  width: 12px;
  height: 12px;
}
.dlg-draw {
  display: block;
  margin: 1px 0 0 1px;
  background: #000;
  border-bottom: 1px solid #a0a0a0;
}
.serif {
  font-family: "Liberation Serif", serif;
  font-size: 84px;
}
.green { fill: #00e000; }
.white { fill: #fff; }
.dark { fill: #111; }
.mm { font-size: 76px; }
.desc {
  font-family: "Noto Sans CJK SC", sans-serif;
  font-size: 75px;
  font-weight: 300;
  fill: #fff;
}
.dlg-foot {
  display: flex;
  justify-content: flex-end;
  gap: 8px;
  padding: 11px 12px 0 0;
}
.dlg-btn {
  display: flex;
  align-items: center;
  justify-content: center;
  width: 72px;
  height: 23px;
  box-sizing: border-box;
  border: 1px solid #adadad;
  background: #e1e1e1;
}
</style>
<style>
body {
  background: #f0f0f0;
}
</style>
